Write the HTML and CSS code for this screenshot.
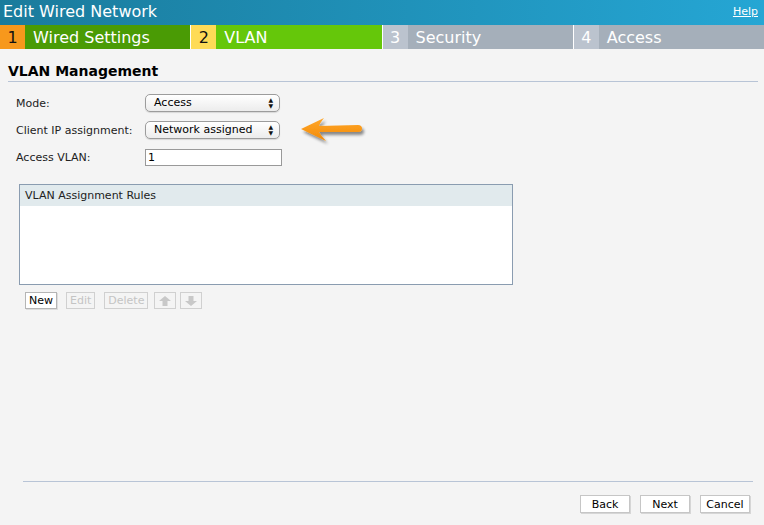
FILE: index.html
```html
<!DOCTYPE html>
<html lang="en">
<head>
  <meta charset="UTF-8">
  <title>Edit Wired Network</title>
  <link rel="stylesheet" href="styles.css">
</head>
<body>

<div class="window">
  <!-- Title bar -->
  <div class="titlebar">
    <span class="title">Edit Wired Network</span>
    <a class="help" href="#">Help</a>
  </div>

  <!-- Wizard steps -->
  <div class="steps">
    <div class="step done"><span class="num">1</span><span class="name">Wired Settings</span></div>
    <div class="step current"><span class="num">2</span><span class="name">VLAN</span></div>
    <div class="step todo"><span class="num">3</span><span class="name">Security</span></div>
    <div class="step todo last"><span class="num">4</span><span class="name">Access</span></div>
  </div>

  <div class="content">
    <h2 class="section-title">VLAN Management</h2>

    <div class="form">
      <div class="form-row">
        <label>Mode:</label>
        <div class="select">Access<span class="updown">&#9650;<br>&#9660;</span></div>
      </div>
      <div class="form-row">
        <label>Client IP assignment:</label>
        <div class="select">Network assigned<span class="updown">&#9650;<br>&#9660;</span></div>
        <svg class="pointer" width="72" height="32" viewBox="0 0 72 32">
          <defs>
            <filter id="sh" x="-20%" y="-30%" width="150%" height="180%">
              <feGaussianBlur in="SourceAlpha" stdDeviation="1.5"/>
              <feOffset dx="2" dy="3" result="b"/>
              <feComponentTransfer><feFuncA type="linear" slope="0.45"/></feComponentTransfer>
              <feMerge><feMergeNode/><feMergeNode in="SourceGraphic"/></feMerge>
            </filter>
            <linearGradient id="og" x1="0" y1="0" x2="0" y2="1">
              <stop offset="0" stop-color="#ffa72a"/>
              <stop offset="1" stop-color="#f38a06"/>
            </linearGradient>
          </defs>
          <path filter="url(#sh)" fill="url(#og)" d="M2 14 L25 3 Q21 8 20 11 L59 10 Q63 10 63 13.5 Q63 17 59 17 L20 17 Q22 21 27 26 Z"/>
        </svg>
      </div>
      <div class="form-row">
        <label>Access VLAN:</label>
        <input class="text-input" type="text" value="1">
      </div>
    </div>

    <div class="rules">
      <div class="rules-head">VLAN Assignment Rules</div>
      <div class="rules-body"></div>
    </div>

    <div class="toolbar">
      <button class="small-btn">New</button>
      <button class="small-btn" disabled>Edit</button>
      <button class="small-btn" disabled>Delete</button>
      <span class="arrows">
        <button class="icon-btn" disabled>
          <svg width="12" height="10" viewBox="0 0 12 10"><path d="M6 0 L12 5 L8.5 5 L8.5 10 L3.5 10 L3.5 5 L0 5 Z" fill="#c8c8c8"/></svg>
        </button>
        <button class="icon-btn" disabled>
          <svg width="12" height="10" viewBox="0 0 12 10"><path d="M6 10 L12 5 L8.5 5 L8.5 0 L3.5 0 L3.5 5 L0 5 Z" fill="#c8c8c8"/></svg>
        </button>
      </span>
    </div>
  </div>

  <div class="footer">
    <button class="nav-btn">Back</button>
    <button class="nav-btn">Next</button>
    <button class="nav-btn">Cancel</button>
  </div>
</div>

</body>
</html>
```

FILE: styles.css
```css
    html, body {
      margin: 0;
      padding: 0;
    }

    body {
      font-family: "DejaVu Sans", Verdana, sans-serif;
      font-size: 11px;
      color: #111;
      background-color: #f4f4f4;
    }

    .window {
      display: flex;
      flex-direction: column;
      height: 525px;
    }

    .titlebar {
      display: flex;
      justify-content: space-between;
      align-items: center;
      height: 25px;
      padding: 0 6px 0 3px;
      background: linear-gradient(to right, #1a7b9c, #25a6d4);
      color: #fff;
    }

    .title {
      font-size: 16px;
      line-height: 25px;
      margin-top: -2px;
    }

    .help {
      color: #fff;
      font-size: 11px;
      text-decoration: underline;
      margin-top: -3px;
    }

    .steps {
      display: flex;
      height: 24px;
    }

    .step {
      flex: 1;
      display: flex;
      border-right: 1px solid #fff;
      font-size: 16px;
      line-height: 22px;
      padding-top: 2px;
    }

    .step.last {
      border-right: none;
    }

    .step .num {
      width: 25px;
      margin-top: -2px;
      padding-top: 2px;
      text-align: center;
    }

    .step .name {
      flex: 1;
      margin-top: -2px;
      padding-top: 2px;
      padding-left: 8px;
    }

    .step.done .num { background: #f7981c; color: #111; }
    .step.done .name { background: #4a9b05; color: #fff; }
    .step.current .num { background: #fedb57; color: #111; }
    .step.current .name { background: #65c70a; color: #fff; }
    .step.todo .num { background: #bbc3ce; color: #fff; }
    .step.todo .name { background: #a5afba; color: #fff; }

    .content {
      flex: 1;
      padding: 0 6px 0 8px;
    }

    .section-title {
      margin: 14px 0 0;
      padding-bottom: 2px;
      font-size: 14px;
      line-height: 16px;
      border-bottom: 1px solid #b8c4d6;
      color: #000;
    }

    .form {
      display: flex;
      flex-direction: column;
      gap: 9px;
      margin: 12px 0 0 8px;
    }

    .form-row {
      display: flex;
      align-items: center;
      height: 18px;
    }

    .form-row label {
      width: 129px;
      color: #222;
    }

    .select {
      position: relative;
      box-sizing: border-box;
      width: 135px;
      height: 18px;
      padding-left: 8px;
      line-height: 16px;
      border: 1px solid #9c9c9c;
      border-radius: 5px;
      background: linear-gradient(#ffffff, #ececec);
      box-shadow: 0 1px 1px rgba(0, 0, 0, 0.12);
      color: #000;
    }

    .updown {
      position: absolute;
      right: 6px;
      top: 2px;
      font-size: 6px;
      line-height: 6px;
      color: #111;
    }

    .pointer {
      margin-left: 19px;
      margin-top: 2px;
    }

    .text-input {
      box-sizing: border-box;
      width: 137px;
      height: 17px;
      margin: 0;
      padding: 0 2px;
      border: 1px solid #999;
      font-family: "DejaVu Sans", Verdana, sans-serif;
      font-size: 11px;
      background: #fff;
    }

    .rules {
      width: 492px;
      margin: 18px 0 0 11px;
      border: 1px solid #8a9cb0;
      background: #fff;
    }

    .rules-head {
      height: 21px;
      line-height: 21px;
      padding-left: 5px;
      background: #e1eaed;
      color: #222;
    }

    .rules-body {
      height: 78px;
    }

    .toolbar {
      display: flex;
      align-items: center;
      gap: 9px;
      margin: 7px 0 0 17px;
    }

    .small-btn {
      height: 17px;
      padding: 0 3px;
      font-family: "DejaVu Sans", Verdana, sans-serif;
      font-size: 11px;
      color: #000;
      background: #fff;
      border: 1px solid #b5b5b5;
      box-shadow: 1px 1px 0 #ddd;
    }

    .small-btn:disabled,
    .icon-btn:disabled {
      color: #c4c4c4;
      background: #f4f4f4;
      border-color: #d0d0d0;
      box-shadow: none;
    }

    .arrows {
      display: flex;
      gap: 4px;
      margin-left: -3px;
    }

    .icon-btn {
      display: flex;
      align-items: center;
      justify-content: center;
      width: 22px;
      height: 17px;
      padding: 0;
      border: 1px solid #d0d0d0;
    }

    .footer {
      display: flex;
      justify-content: flex-end;
      gap: 10px;
      margin: 0 11px 12px 23px;
      padding: 13px 3px 0 0;
      border-top: 1px solid #b8c4d6;
    }

    .nav-btn {
      width: 50px;
      height: 18px;
      padding: 0;
      font-family: "DejaVu Sans", Verdana, sans-serif;
      font-size: 11px;
      color: #000;
      background: #fff;
      border: 1px solid #c6c6c6;
      box-shadow: 1px 1px 0 #d6d6d6;
    }
```
